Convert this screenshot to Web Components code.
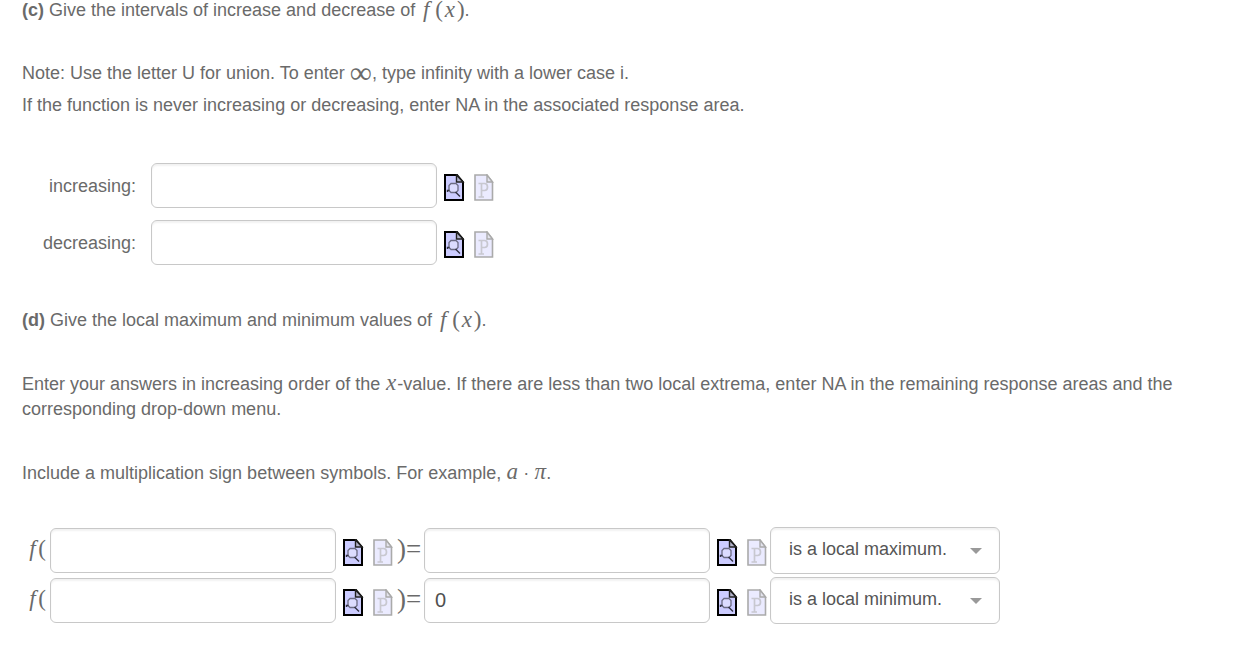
<!DOCTYPE html>
<html lang="en">
<head>
<meta charset="utf-8">
<title>Intervals and local extrema</title>
<style>
body { margin: 0; background: #fff; color: #6a6a6a; font: 18px/25px "Liberation Sans", Arial, sans-serif; }
</style>
</head>
<body>
<question-page></question-page>
<script>
function define(name, html) {
  const template = document.createElement('template');
  template.innerHTML = html;
  customElements.define(name, class extends HTMLElement {
    constructor() {
      super();
      this.attachShadow({ mode: 'open' }).append(template.content.cloneNode(true));
    }
    connectedCallback() {
      const root = this.shadowRoot;
      const input = root.querySelector('input');
      if (input) {
        input.value = this.getAttribute('value') || '';
        input.setAttribute('aria-label', this.getAttribute('label'));
      }
      const select = root.querySelector('select');
      if (select) {
        select.value = this.getAttribute('value');
        select.setAttribute('aria-label', this.getAttribute('label'));
      }
    }
  });
}

define('math-text', `
<style>
:host { display: inline-block; font: 23px/12px "Liberation Serif", "Times New Roman", serif; white-space: nowrap; }
:host([wide]) { font-size: 31px; vertical-align: -4px; }
:host([relation]) { font-size: 27px; }
</style><slot></slot>`);

define('math-var', `
<style>
:host { display: inline-block; width: 14px; text-align: center; font: italic 23px/12px "Liberation Serif", "Times New Roman", serif; }
:host([narrow]) { width: 12px; }
</style><slot></slot>`);

define('function-of-x', `
<style>
:host { display: inline-flex; align-items: baseline; line-height: 12px; vertical-align: -1px; }
.body { margin-left: 3px; }
</style><math-var narrow>f</math-var><math-text class="body">(<math-var>x</math-var>)</math-text>`);

define('answer-tools', `
<style>
:host { display: flex; gap: 9px; padding-top: 4px; }
button { display: block; border: 0; padding: 0; background: none; width: 21px; height: 27px; cursor: pointer; }
button:disabled { cursor: default; }
svg { display: block; }
</style>
<button type="button" aria-label="Preview answer">
<svg width="21" height="27" viewBox="0 0 21 27" fill="none">
<path d="M1 1H13L19 8V26H1Z" fill="#ccccff" stroke="#000" stroke-width="2"/>
<path d="M12.5 1V8H19Z" fill="#b4b4cc" stroke="#222" stroke-width="1.4"/>
<path d="M7 9.5H12L14 11.5V16.5L12 18.5H7L5 16.5V11.5Z" fill="#dcdcff" stroke="#6c6c84" stroke-width="1.3"/>
<path d="M3.5 18V16.5H5.5M11.5 18L16 22.5" stroke="#333344" stroke-width="1.4"/>
</svg></button>
<button type="button" disabled aria-label="Symbol palette">
<svg width="21" height="27" viewBox="0 0 21 27" fill="none">
<path d="M1 1H13L18.5 8V26H1Z" fill="#ebebff" stroke="#aaa" stroke-width="1.6"/>
<path d="M13 1V8H18.5Z" fill="#e4e4ee" stroke="#aaa" stroke-width="1.4"/>
<path d="M4.5 9.5H10.5Q13.5 9.5 13.5 13Q13.5 16.5 10.5 16.5H7.5M7.5 9.5V23M4.5 23H10" stroke="#c8c8d0" stroke-width="1.7"/>
</svg></button>`);

define('answer-field', `
<style>
:host { display: flex; align-items: center; gap: 7px; }
input { box-sizing: border-box; width: 286px; height: 45px; margin: 0; padding: 0 10px; border: 1px solid #c8c8c8; border-radius: 6px;
  background: #fff; box-shadow: inset 0 2px 2px #f2f2f2; color: #505050; font: 20px/25px "Liberation Sans", Arial, sans-serif; outline: none; }
input:focus-visible { border-color: #668; }
</style><input type="text"><answer-tools></answer-tools>`);

define('extremum-select', `
<style>
:host { display: grid; width: 230px; align-items: center; }
select, svg { grid-area: 1 / 1; }
select { box-sizing: border-box; appearance: none; width: 100%; height: 47px; margin: 0; padding: 0 40px 2px 18px; border: 1px solid #c8c8c8; border-radius: 6px;
  background: #fff; box-shadow: inset 0 2px 2px #f2f2f2; color: #555; font: 18px/25px "Liberation Sans", Arial, sans-serif; }
svg { justify-self: end; margin-right: 18px; pointer-events: none; }
</style>
<select><option value="max">is a local maximum.</option><option value="min">is a local minimum.</option><option value="na">NA</option></select>
<svg width="12" height="6" viewBox="0 0 12 6"><path d="M0 0H12L6 6Z" fill="#999"/></svg>`);

define('interval-row', `
<style>
:host { display: grid; grid-template-columns: 114px auto; justify-content: start; align-items: center; gap: 15px; }
.label { text-align: right; padding-top: 2px; }
</style><span class="label"><slot></slot></span><slot name="field"></slot>`);

define('extremum-row', `
<style>
:host { display: flex; align-items: center; }
.open { width: 28px; padding-bottom: 3px; display: flex; align-items: baseline; justify-content: flex-end; box-sizing: border-box; padding-right: 4px; }
.equals { width: 30px; padding-bottom: 3px; text-align: center; }
slot[name="verdict"] { display: block; margin-left: 2px; }
</style>
<span class="open"><math-var narrow>f</math-var><math-text>(</math-text></span>
<slot name="argument"></slot>
<math-text relation class="equals">)=</math-text>
<slot name="result"></slot>
<slot name="verdict"></slot>`);

define('question-page', `
<style>
:host { display: block; padding: 0 22px 22px; }
p { margin: 0; }
.lead { line-height: 20px; }
.note { margin-top: 37px; line-height: 32px; }
.intervals { display: grid; gap: 12px; margin-top: 42px; }
.second { margin-top: 45px; }
.order { margin-top: 42px; }
.include { margin-top: 39px; }
.extrema { display: grid; gap: 3px; margin-top: 41px; }
</style>
<p class="lead"><b>(c)</b> Give the intervals of increase and decrease of <function-of-x></function-of-x>.</p>
<div class="note">
<p>Note: Use the letter U for union. To enter <math-text wide>∞</math-text>, type infinity with a lower case i.</p>
<p>If the function is never increasing or decreasing, enter NA in the associated response area.</p>
</div>
<div class="intervals">
<interval-row>increasing:<answer-field slot="field" label="increasing"></answer-field></interval-row>
<interval-row>decreasing:<answer-field slot="field" label="decreasing"></answer-field></interval-row>
</div>
<p class="lead second"><b>(d)</b> Give the local maximum and minimum values of <function-of-x></function-of-x>.</p>
<p class="order">Enter your answers in increasing order of the <math-var narrow>x</math-var>-value. If there are less than two local extrema, enter NA in the remaining response areas and the corresponding drop-down menu.</p>
<p class="include">Include a multiplication sign between symbols. For example, <math-var narrow>a</math-var> · <math-var narrow>π</math-var>.</p>
<div class="extrema">
<extremum-row>
<answer-field slot="argument" label="First x-value"></answer-field>
<answer-field slot="result" label="First function value"></answer-field>
<extremum-select slot="verdict" label="First extremum type" value="max"></extremum-select>
</extremum-row>
<extremum-row>
<answer-field slot="argument" label="Second x-value"></answer-field>
<answer-field slot="result" label="Second function value" value="0"></answer-field>
<extremum-select slot="verdict" label="Second extremum type" value="min"></extremum-select>
</extremum-row>
</div>`);
</script>
</body>
</html>
